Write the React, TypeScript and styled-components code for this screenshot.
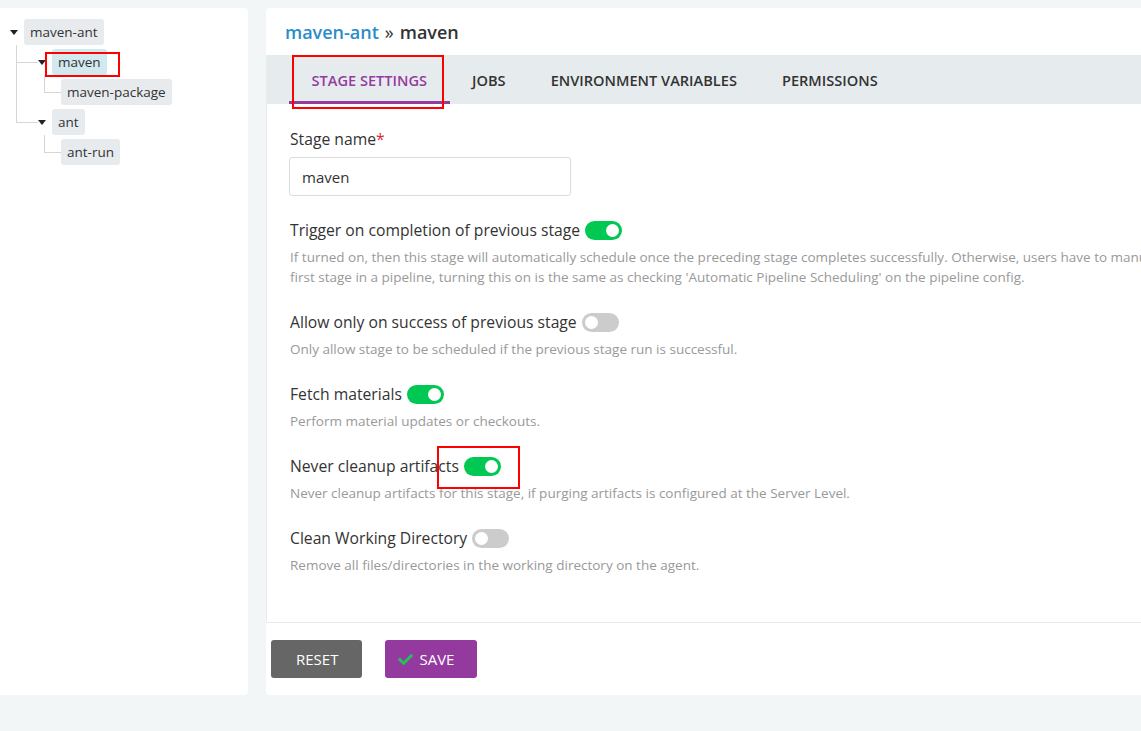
import React from "react"
import styled, { createGlobalStyle } from "styled-components"

// Types
interface TreeNodeData {
  label: string
  selected?: boolean
  children?: TreeNodeData[]
}

interface ToggleField {
  label: string
  on: boolean
  description: React.ReactNode
}

// Data
const pipelineTree: TreeNodeData[] = [
  {
    label: "maven-ant",
    children: [
      { label: "maven", selected: true, children: [{ label: "maven-package" }] },
      { label: "ant", children: [{ label: "ant-run" }] },
    ],
  },
]

const tabs = ["Stage Settings", "Jobs", "Environment Variables", "Permissions"]

const toggleFields: ToggleField[] = [
  {
    label: "Trigger on completion of previous stage",
    on: true,
    description: (
      <>
        If turned on, then this stage will automatically schedule once the preceding stage completes
        successfully. Otherwise, users have to manually trigger this stage. For the
        <br />
        first stage in a pipeline, turning this on is the same as checking 'Automatic Pipeline
        Scheduling' on the pipeline config.
      </>
    ),
  },
  {
    label: "Allow only on success of previous stage",
    on: false,
    description: "Only allow stage to be scheduled if the previous stage run is successful.",
  },
  {
    label: "Fetch materials",
    on: true,
    description: "Perform material updates or checkouts.",
  },
  {
    label: "Never cleanup artifacts",
    on: true,
    description:
      "Never cleanup artifacts for this stage, if purging artifacts is configured at the Server Level.",
  },
  {
    label: "Clean Working Directory",
    on: false,
    description: "Remove all files/directories in the working directory on the agent.",
  },
]

// Red highlight boxes drawn over the screenshot
const highlights = [
  { left: 45, top: 52, width: 75, height: 25 },
  { left: 292, top: 55, width: 152, height: 54 },
  { left: 437, top: 446, width: 83, height: 43 },
]

// Tree
const TreeNode: React.FC<{ node: TreeNodeData; indent?: number }> = ({ node, indent }) => {
  const hasChildren = !!node.children?.length
  const childIndent = node.children?.some((c) => c.children?.length) ? 22 : 17

  return (
    <TreeItem $indent={indent}>
      <TreeRow>
        {hasChildren && <Caret />}
        <NodeChip $selected={node.selected}>{node.label}</NodeChip>
      </TreeRow>
      {hasChildren && (
        <ChildList $indent={childIndent}>
          {node.children!.map((child) => (
            <TreeNode key={child.label} node={child} indent={childIndent} />
          ))}
        </ChildList>
      )}
    </TreeItem>
  )
}

const CheckIcon = () => (
  <svg width="15" height="15" viewBox="0 0 512 512" aria-hidden="true">
    <path
      fill="#1ec35a"
      d="M173.9 439.4l-166.4-166.4c-10-10-10-26.2 0-36.2l36.2-36.2c10-10 26.2-10 36.2 0L192 312.7 432.1 72.6c10-10 26.2-10 36.2 0l36.2 36.2c10 10 10 26.2 0 36.2l-294.4 294.4c-10 10-26.2 10-36.2 0z"
    />
  </svg>
)

const App: React.FC = () => {
  return (
    <>
      <GlobalStyle />
      <Page>
        <Sidebar>
          <RootList>
            {pipelineTree.map((node) => (
              <TreeNode key={node.label} node={node} />
            ))}
          </RootList>
        </Sidebar>

        <Main>
          <Breadcrumb>
            <CrumbLink>maven-ant</CrumbLink>
            <CrumbSep>»</CrumbSep>
            <span>maven</span>
          </Breadcrumb>

          <TabBar>
            {tabs.map((tab, i) => (
              <Tab key={tab} $active={i === 0}>
                {tab}
              </Tab>
            ))}
          </TabBar>

          <Content>
            <Field $spacing={22}>
              <Label>
                <span>
                  Stage name<Required>*</Required>
                </span>
              </Label>
              <TextInput defaultValue="maven" />
            </Field>

            {toggleFields.map((field) => (
              <Field key={field.label}>
                <Label>
                  {field.label}
                  <Switch $on={field.on}>
                    <Knob />
                  </Switch>
                </Label>
                <Help>{field.description}</Help>
              </Field>
            ))}
          </Content>

          <Footer>
            <Button $variant="reset">Reset</Button>
            <Button $variant="save">
              <CheckIcon />
              Save
            </Button>
          </Footer>
        </Main>

        {highlights.map((h, i) => (
          <Highlight key={i} style={{ left: h.left, top: h.top, width: h.width, height: h.height }} />
        ))}
      </Page>
    </>
  )
}

const GlobalStyle = createGlobalStyle`
  * {
    box-sizing: border-box;
  }

  html,
  body {
    margin: 0;
    padding: 0;
    background: #f3f6f7;
    overflow: hidden;
  }

  body {
    font-family: "Open Sans", "Liberation Sans", sans-serif;
    color: #333;
  }
`

const Page = styled.div`
  position: relative;
  display: flex;
  gap: 18px;
  height: 731px;
  padding-top: 8px;
`

const Sidebar = styled.aside`
  flex: 0 0 248px;
  height: 687px;
  background: #fff;
  border-radius: 0 4px 4px 0;
`

const RootList = styled.ul`
  list-style: none;
  margin: 0;
  padding: 7px 0 0 10px;
`

const ChildList = styled.ul<{ $indent: number }>`
  list-style: none;
  margin: 0 0 0 6px;
  padding: 0 0 0 ${(p) => p.$indent}px;
`

const TreeItem = styled.li<{ $indent?: number }>`
  position: relative;
  padding-top: 4px;

  ${(p) =>
    p.$indent &&
    `
    &::before {
      content: "";
      position: absolute;
      left: -${p.$indent}px;
      top: 0;
      width: ${p.$indent - 1}px;
      height: 17px;
      border-left: 1px solid #d6d6d6;
      border-bottom: 1px solid #d6d6d6;
    }

    &:not(:last-child)::after {
      content: "";
      position: absolute;
      left: -${p.$indent}px;
      top: 0;
      bottom: 0;
      border-left: 1px solid #d6d6d6;
    }
  `}
`

const TreeRow = styled.div`
  display: flex;
  align-items: center;
  gap: 6px;
  height: 26px;
`

const Caret = styled.span`
  width: 0;
  height: 0;
  border-left: 4.5px solid transparent;
  border-right: 4.5px solid transparent;
  border-top: 5px solid #222;
`

const NodeChip = styled.span<{ $selected?: boolean }>`
  height: 26px;
  padding: 0 6px;
  line-height: 26px;
  font-size: 13.5px;
  color: #333;
  border-radius: 3px;
  background: ${(p) => (p.$selected ? "#d2e9ef" : "#e8ebee")};
`

const Main = styled.main`
  flex: 0 0 1200px;
  display: flex;
  flex-direction: column;
  height: 687px;
  background: #fff;
  border-radius: 4px;
`

const Breadcrumb = styled.div`
  display: flex;
  align-items: center;
  height: 47px;
  padding: 0 19px;
  font-size: 18px;
  font-weight: 600;
  color: #333;
`

const CrumbLink = styled.span`
  color: #2a8dca;
`

const CrumbSep = styled.span`
  margin: 0 6px;
  font-weight: 400;
`

const TabBar = styled.nav`
  display: flex;
  height: 49px;
  padding-left: 23px;
  background: #e6ecee;
`

const Tab = styled.div<{ $active?: boolean }>`
  display: flex;
  align-items: center;
  padding: 1px 22.5px 0;
  font-size: 14.6px;
  font-weight: 600;
  text-transform: uppercase;
  color: ${(p) => (p.$active ? "#943b9f" : "#333")};
  box-shadow: ${(p) => (p.$active ? "inset 0 -3px 0 #943b9f" : "none")};
`

const Content = styled.section`
  flex: 1;
  padding: 23px 23px 0;
  border: 1px solid #e6ecee;
  border-top: none;
`

const Field = styled.div<{ $spacing?: number }>`
  margin-bottom: ${(p) => p.$spacing ?? 23}px;
`

const Label = styled.div`
  display: flex;
  align-items: center;
  gap: 5px;
  font-size: 15.7px;
  line-height: 24px;
  color: #333;
`

const Required = styled.span`
  color: #e0282e;
`

const TextInput = styled.input`
  display: block;
  width: 282px;
  height: 39px;
  margin: 6px 0 0 -1px;
  padding: 0 12px;
  border: 1px solid #dcdcdc;
  border-radius: 3px;
  font-family: inherit;
  font-size: 15px;
  color: #333;
  outline: none;
`

const Switch = styled.span<{ $on: boolean }>`
  display: inline-flex;
  align-items: center;
  justify-content: ${(p) => (p.$on ? "flex-end" : "flex-start")};
  width: 37px;
  height: 19px;
  padding: 0 3px;
  border-radius: 10px;
  background: ${(p) => (p.$on ? "#00c853" : "#cccccc")};
`

const Knob = styled.span`
  width: 13px;
  height: 13px;
  border-radius: 50%;
  background: #fff;
`

const Help = styled.div`
  margin-top: 5px;
  font-size: 13.5px;
  line-height: 20px;
  color: #999;
`

const Footer = styled.footer`
  display: flex;
  gap: 23px;
  height: 72px;
  padding: 17px 5px;
`

const Button = styled.button<{ $variant: "reset" | "save" }>`
  display: inline-flex;
  align-items: center;
  gap: 6px;
  height: 38px;
  padding: ${(p) => (p.$variant === "reset" ? "0 24px 0 25px" : "0 23px 0 13px")};
  border: none;
  border-radius: 3px;
  font-family: inherit;
  font-size: 15px;
  text-transform: uppercase;
  color: #fff;
  background: ${(p) => (p.$variant === "reset" ? "#666" : "#943a9e")};
`

const Highlight = styled.div`
  position: absolute;
  border: 2px solid #f00;
  pointer-events: none;
`

export default App
